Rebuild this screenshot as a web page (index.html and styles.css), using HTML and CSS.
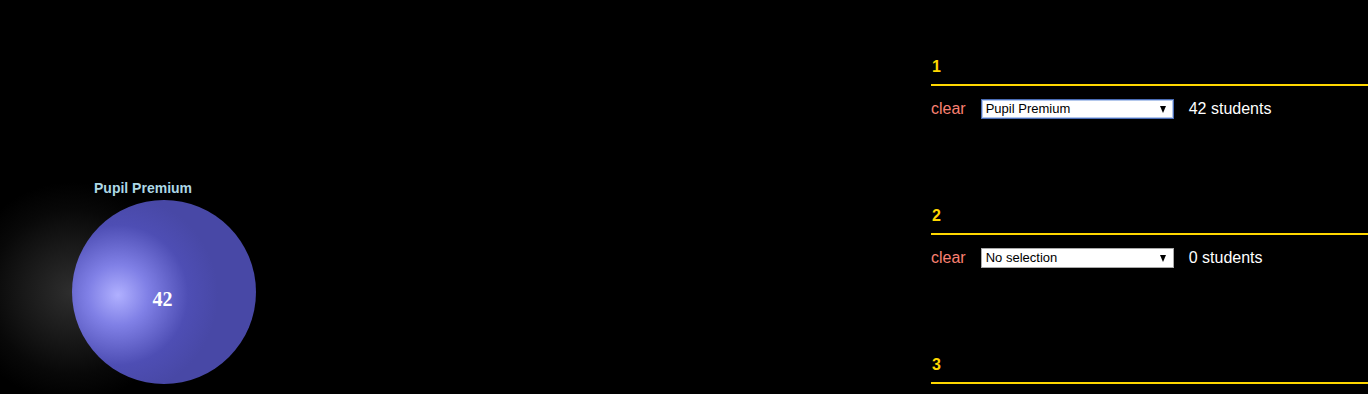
FILE: index.html
```html
<!DOCTYPE html>
<html>
<head>
<meta charset="utf-8">
<link rel="stylesheet" href="styles.css">
</head>
<body>
<div class="page">
  <div class="canvas">
    <svg width="931" height="394" viewBox="0 0 931 394">
      <defs>
        <radialGradient id="glow" gradientUnits="userSpaceOnUse" cx="72" cy="292" r="110">
          <stop offset="0" stop-color="#2e2e2e"/>
          <stop offset="0.4" stop-color="#1a1a1a"/>
          <stop offset="0.75" stop-color="#080808"/>
          <stop offset="1" stop-color="#000000"/>
        </radialGradient>
        <radialGradient id="ball" gradientUnits="userSpaceOnUse" cx="118" cy="295" r="100">
          <stop offset="0" stop-color="#b0b0ff"/>
          <stop offset="0.3" stop-color="#8080e6"/>
          <stop offset="0.7" stop-color="#4e4eb4"/>
          <stop offset="1" stop-color="#4848a6"/>
        </radialGradient>
      </defs>
      <circle cx="72" cy="292" r="110" fill="url(#glow)"/>
      <circle cx="164" cy="292" r="92" fill="url(#ball)"/>
      <text class="node-label" x="94" y="192.5">Pupil Premium</text>
      <text class="node-count" x="162.5" y="306" text-anchor="middle">42</text>
    </svg>
  </div>
  <div class="panel">
    <div class="section">
      <div class="section-title">1</div>
      <div class="row">
        <span class="clear">clear</span>
        <span class="select-wrap active">
          <select class="picker">
            <option>Pupil Premium</option>
          </select>
        </span>
        <span class="count">42 students</span>
      </div>
    </div>
    <div class="section">
      <div class="section-title">2</div>
      <div class="row">
        <span class="clear">clear</span>
        <span class="select-wrap">
          <select class="picker">
            <option>No selection</option>
          </select>
        </span>
        <span class="count">0 students</span>
      </div>
    </div>
    <div class="section">
      <div class="section-title">3</div>
    </div>
  </div>
</div>
</body>
</html>
```

FILE: styles.css
```css
html, body {
  margin: 0;
  padding: 0;
  background: #000;
}

body {
  font-family: "Liberation Sans", Arial, sans-serif;
  color: #fff;
}

.page {
  display: flex;
  width: 1368px;
  height: 394px;
  overflow: hidden;
}

.canvas {
  flex: none;
  width: 931px;
}

.canvas svg {
  display: block;
}

.node-label {
  font-family: "Liberation Sans", Arial, sans-serif;
  font-weight: bold;
  font-size: 14px;
  fill: #add8e6;
}

.node-count {
  font-family: "Liberation Serif", "Times New Roman", serif;
  font-weight: bold;
  font-size: 20px;
  fill: #fff;
}

.panel {
  flex: 1;
  padding-top: 59px;
}

.section {
  height: 149px;
}

.section-title {
  font-size: 16px;
  font-weight: bold;
  line-height: 16px;
  color: #ffd700;
  padding-left: 1px;
  padding-bottom: 9px;
  border-bottom: 2px solid #ffd700;
}

.row {
  display: flex;
  align-items: center;
  margin-top: 13px;
  height: 20px;
  font-size: 16px;
  line-height: 18px;
}

.clear {
  color: #fa8072;
  margin-right: 15px;
}

.select-wrap {
  position: relative;
  display: block;
  width: 193px;
  height: 20px;
}

.picker {
  -webkit-appearance: none;
  appearance: none;
  box-sizing: border-box;
  width: 193px;
  height: 20px;
  margin: 0;
  padding: 0 20px 0 4px;
  border: 1px solid #a9a9a9;
  border-radius: 0;
  background: #fff;
  color: #000;
  font-family: "Liberation Sans", Arial, sans-serif;
  font-size: 13px;
  line-height: 18px;
  outline: none;
}

.select-wrap.active .picker {
  border-color: #4a6cb4;
  box-shadow: inset 0 0 0 1px #b4c8ec;
}

.select-wrap::after {
  content: "";
  position: absolute;
  right: 8px;
  top: 7px;
  width: 0;
  height: 0;
  border-left: 3.5px solid transparent;
  border-right: 3.5px solid transparent;
  border-top: 7px solid #000;
  pointer-events: none;
}

.count {
  margin-left: 15px;
  color: #fff;
}
```
